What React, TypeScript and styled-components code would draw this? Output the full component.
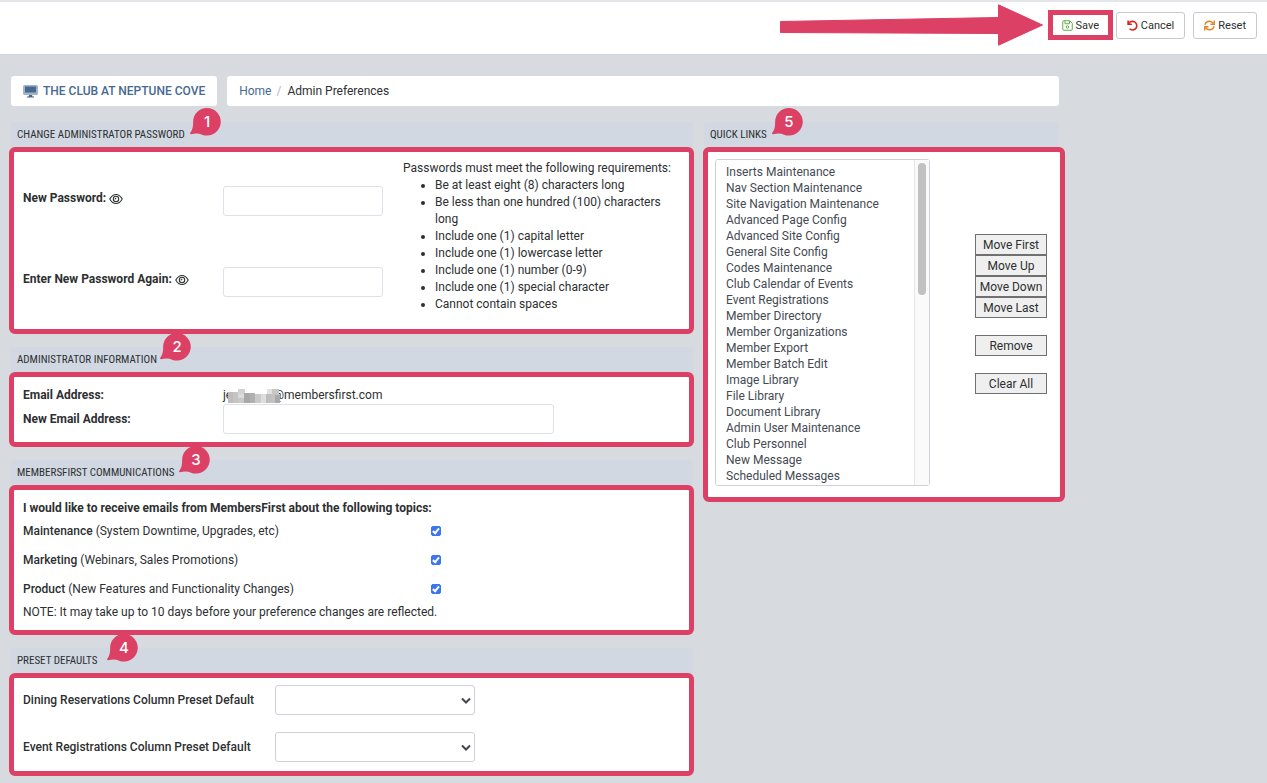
import React from "react";
import styled, { createGlobalStyle } from "styled-components";

const pink = "#dc4064";
const link = "#456990";
const ink = "#2d2f31";
const sans = `Roboto, "Liberation Sans", sans-serif`;

const GlobalStyle = createGlobalStyle`
  *, *::before, *::after { box-sizing: border-box; }
  body {
    margin: 0;
    background: #d7dade;
    color: ${ink};
    font-family: ${sans};
    font-size: 12px;
    line-height: 17px;
  }
  button, input, select { font-family: inherit; font-size: inherit; color: inherit; }
  svg { flex: none; }
`;

const Toolbar = styled.header`
  display: flex;
  justify-content: flex-end;
  align-items: center;
  height: 55px;
  padding: 0 10px 6px 0;
  background: #fff;
  border-top: 2px solid #e4e6e9;
  border-bottom: 1px solid #d1d4d9;
`;

const Arrow = styled.svg`
  width: 263px;
  height: 42px;
  margin-right: 5px;
`;

const SaveFrame = styled.div`
  border: 5px solid ${pink};
  margin-right: 3px;
`;

const ToolButton = styled.button<{ $plain?: boolean }>`
  display: flex;
  align-items: center;
  justify-content: center;
  gap: 3px;
  width: ${(p) => (p.$plain ? "55px" : "auto")};
  height: ${(p) => (p.$plain ? "20px" : "27px")};
  padding: ${(p) => (p.$plain ? "0" : "0 10px")};
  border: ${(p) => (p.$plain ? "0" : "1px solid #c8cacd")};
  border-radius: 3px;
  background: #fff;
  font-size: 11px;
  & + & { margin-left: 8px; }
`;

const Page = styled.main`
  max-width: 1070px;
  padding: 21px 11px 7px;
`;

const CrumbRow = styled.div`
  display: flex;
  gap: 10px;
  margin-bottom: 16px;
`;

const Club = styled.a`
  display: flex;
  align-items: center;
  gap: 5px;
  height: 30px;
  padding: 0 12px;
  background: #fff;
  border-radius: 3px;
  color: ${link};
  font-weight: 500;
  text-decoration: none;
`;

const Crumbs = styled.nav`
  display: flex;
  align-items: center;
  flex: 1;
  height: 30px;
  padding: 0 12px;
  background: #fff;
  border-radius: 3px;
`;

const CrumbLink = styled.a`
  color: ${link};
  text-decoration: none;
`;

const Slash = styled.span`
  padding: 0 6px 0 5px;
  color: #b4b8bd;
`;

const Columns = styled.div`
  display: grid;
  grid-template-columns: minmax(0, 682fr) minmax(0, 355fr);
  gap: 11px;
  align-items: start;
`;

const Stack = styled.div`
  display: grid;
  gap: 13px;
`;

const PanelHead = styled.div`
  position: relative;
  height: 25px;
  padding: 0 6px;
  background: #d1d8e2;
  border-radius: 4px 4px 0 0;
`;

const PanelTitle = styled.h2`
  margin: 0;
  font-family: "Roboto Condensed", Roboto, sans-serif;
  font-size: 11px;
  font-weight: 400;
  line-height: 26px;
  text-transform: uppercase;
`;

const Badge = styled.span<{ $at: number }>`
  position: absolute;
  top: -14px;
  left: ${(p) => p.$at}px;
  width: 31px;
  height: 28px;
  padding-left: 3px;
  color: #fff;
  font: 500 15px/28px Inter, Roboto, sans-serif;
  text-align: center;
  z-index: 1;
  svg { position: absolute; inset: 0; z-index: -1; }
`;

const Body = styled.div<{ $right?: boolean }>`
  margin: ${(p) => (p.$right ? "0 -6px 0 -1px" : "0 -1px 0 -2px")};
  border: 5px solid ${pink};
  border-radius: 6px;
  background: #fff;
`;

const Panel = ({ title, badge, at, right, children }: {
  title: string; badge: number; at: number; right?: boolean; children: React.ReactNode;
}) => (
  <section>
    <PanelHead>
      <PanelTitle>{title}</PanelTitle>
      <Badge $at={at}>
        <svg width="31" height="28" viewBox="0 0 32 29" aria-hidden="true">
          <path fill={pink} d="M17.5 0A14.3 14.3 0 1 1 12.5 27.7C9 26 5 26.2 1.2 27.2Q-.6 27 .4 25.5C2.800 22 3.200 19 3.200 14.500A14.300 14.300 0 0 1 17.500 0Z" />
        </svg>
        {badge}
      </Badge>
    </PanelHead>
    <Body $right={right}>{children}</Body>
  </section>
);

const PasswordLayout = styled.div`
  display: grid;
  grid-template-columns: 380px minmax(0, 1fr);
  padding: 8px 8px 7px 9px;
`;

const PasswordFields = styled.div`
  display: grid;
  grid-auto-rows: 81px;
  align-items: center;
  label { padding-bottom: 4px; }
`;

const Field = styled.div`
  display: grid;
  grid-template-columns: 200px minmax(0, 1fr);
  align-items: center;
`;

const Label = styled.label<{ $weight?: number }>`
  display: flex;
  align-items: center;
  gap: 3px;
  font-weight: ${(p) => p.$weight ?? 700};
`;

const TextBox = styled.input<{ $wide?: boolean }>`
  width: ${(p) => (p.$wide ? "331px" : "160px")};
  max-width: 100%;
  height: 30px;
  padding: 0 10px;
  border: 1px solid #dee1e7;
  border-radius: 3px;
  background: #fff;
`;

const Rules = styled.ul`
  margin: 0;
  padding-left: 32px;
`;

const EmailLayout = styled.div`
  display: grid;
  padding: 10px 9px 8px;
`;

const EmailValue = styled.span`
  display: flex;
  align-items: center;
`;

const Mosaic = styled.svg`
  width: 55px;
  height: 14px;
  margin: 0 -8px 0 -6px;
  position: relative;
`;

const Topics = styled.div`
  padding: 10px 9px 9px;
`;

const Strong = styled.strong<{ $medium?: boolean }>`
  font-weight: ${(p) => (p.$medium ? 500 : 700)};
`;

const Topic = styled.div`
  display: grid;
  grid-template-columns: 408px auto;
  justify-content: start;
  align-items: center;
  height: 29px;
`;

const Tick = styled.input`
  appearance: none;
  display: grid;
  width: 10px;
  height: 10px;
  margin: 0 0 2px;
  border-radius: 2px;
  border: 1px solid #767676;
  &:checked { background: #3b75f0; border-color: #3b75f0; }
  &:checked::after {
    content: "";
    width: 4px;
    height: 7px;
    margin: 0 2px;
    border: solid #fff;
    border-width: 0 2px 2px 0;
    transform: rotate(40deg);
  }
`;

const Presets = styled.div`
  display: grid;
  gap: 17px;
  padding: 7px 9px 9px;
`;

const PresetRow = styled.div`
  display: grid;
  grid-template-columns: 252px minmax(0, 200px);
  align-items: center;
`;

const Drop = styled.div`
  position: relative;
  svg { position: absolute; right: 4px; top: 12px; pointer-events: none; }
`;

const DropSelect = styled.select`
  appearance: none;
  display: block;
  width: 100%;
  height: 30px;
  padding: 0 20px 0 10px;
  border: 1px solid #ced1d8;
  border-radius: 3px;
  background: #fff;
`;

const QuickLayout = styled.div`
  display: flex;
  align-items: flex-start;
  justify-content: space-between;
  padding: 7px 13px 11px 7px;
`;

const ListWrap = styled.div`
  position: relative;
  width: 215px;
`;

const List = styled.select`
  display: block;
  width: 100%;
  height: 327px;
  padding: 5px 0 0 8px;
  border: 1px solid #ced1d8;
  border-radius: 3px;
  background: #fff;
  color: #444a52;
  overflow-y: scroll;
  scrollbar-width: none;
  option { min-height: 0; height: 16px; padding: 0 2px; line-height: 16px; }
`;

const Track = styled.div`
  position: absolute;
  top: 1px;
  right: 1px;
  bottom: 1px;
  width: 15px;
  padding: 3px;
  border-left: 1px solid #e6e6e6;
  background: #fafafa;
  pointer-events: none;
  &::before {
    content: "";
    display: block;
    width: 8px;
    height: 132px;
    border-radius: 4px;
    background: #c1c1c1;
  }
`;

const Actions = styled.div`
  display: grid;
  gap: 17px;
  width: 72px;
  padding-top: 75px;
`;

const ActionGroup = styled.div`
  display: grid;
`;

const Action = styled.button`
  height: 21px;
  padding: 0;
  border: 1px solid #707070;
  border-radius: 0;
  background: #efefef;
  white-space: nowrap;
`;

const SaveIcon = () => (
  <svg width="11" height="11" viewBox="0 0 22 22" fill="none" stroke="#5fae4b" strokeWidth="2" aria-hidden="true">
    <path d="M3.500 1.500h12l5 5v12a2 2 0 0 1-2 2h-15a2 2 0 0 1-2-2v-15a2 2 0 0 1 2-2Z" />
    <path d="M6 2v5.500h9V2" />
    <circle cx="11" cy="14" r="2.500" />
  </svg>
);

const UndoIcon = () => (
  <svg width="11" height="11" viewBox="0 0 22 22" fill="none" stroke="#e0201b" strokeWidth="3.200" aria-hidden="true">
    <path d="M2.200 1v7.500h7.500" />
    <path d="M3 8A8.600 8.600 0 1 1 5 17.500" />
  </svg>
);

const ResetIcon = () => (
  <svg width="11" height="11" viewBox="0 0 22 22" fill="none" stroke="#e08326" strokeWidth="2.800" aria-hidden="true">
    <path d="M2 9.500C3 5 6.500 2.400 11 2.400c3.500 0 6 1.600 8 4.600" />
    <path d="M20 12.500c-1 4.500-4.500 7.100-9 7.100-3.500 0-6-1.600-8-4.600" />
    <path d="M20.500 1v7.500H13" />
    <path d="M1.500 21v-7.500H9" />
  </svg>
);

const MonitorIcon = () => (
  <svg width="15" height="13" viewBox="0 0 15 13" aria-hidden="true">
    <path fill="#a3b4c8" d="M1.500 0h12A1.500 1.500 0 0 1 15 1.500v7a1.500 1.500 0 0 1-1.500 1.500h-12A1.500 1.500 0 0 1 0 8.500v-7A1.500 1.500 0 0 1 1.500 0Z" />
    <path fill={link} d="M2 1.500h11v6H2zM6 10h3l.5 1.500H11v1H4v-1h1.500z" />
  </svg>
);

const EyeIcon = () => (
  <svg width="14" height="12" viewBox="0 0 26 22" fill="none" stroke={ink} strokeWidth="2" aria-hidden="true">
    <path d="M1.500 11C4.500 5.500 8.500 2.500 13 2.500S21.500 5.500 24.500 11C21.500 16.500 17.500 19.500 13 19.500S4.500 16.500 1.500 11Z" />
    <circle cx="13" cy="11" r="5" />
    <path d="M13 8.500a2.500 2.500 0 0 1-2.500 2.500" />
  </svg>
);

const Chevron = () => (
  <svg width="10" height="8" viewBox="0 0 10 8" fill="none" stroke="#43474d" strokeWidth="2" aria-hidden="true">
    <path d="M1 1.500 5 5.500 9 1.500" />
  </svg>
);

const mosaic: [number, number, number, number, string][] = [
  [2, 3, 5, 11, "#bdbdbd"], [7, 3, 5, 11, "#c4c4c4"], [12, 3, 6, 6, "#dcdcdc"], [12, 9, 6, 5, "#c8c8c8"],
  [12, 0, 7, 5, "#d2d2d2"], [18, 4, 6, 10, "#a8a8a8"], [24, 4, 5, 10, "#b0b0b0"], [29, 5, 6, 9, "#cacaca"],
  [35, 5, 5, 9, "#dddddd"], [40, 5, 5, 9, "#bdbdbd"], [45, 5, 4, 9, "#c2c2c2"], [41, 0, 5, 5, "#e0e0e0"],
  [46, 0, 7, 6, "#c6c6c6"], [49, 6, 5, 8, "#a9a9a9"],
];

const rules = [
  "Be at least eight (8) characters long",
  "Be less than one hundred (100) characters long",
  "Include one (1) capital letter",
  "Include one (1) lowercase letter",
  "Include one (1) number (0-9)",
  "Include one (1) special character",
  "Cannot contain spaces",
];

const topics = [
  ["maintenance", "Maintenance", "(System Downtime, Upgrades, etc)"],
  ["marketing", "Marketing", "(Webinars, Sales Promotions)"],
  ["product", "Product", "(New Features and Functionality Changes)"],
];

const presets = [
  ["dining", "Dining Reservations Column Preset Default"],
  ["events", "Event Registrations Column Preset Default"],
];

const quickLinks = [
  "Inserts Maintenance", "Nav Section Maintenance", "Site Navigation Maintenance", "Advanced Page Config",
  "Advanced Site Config", "General Site Config", "Codes Maintenance", "Club Calendar of Events",
  "Event Registrations", "Member Directory", "Member Organizations", "Member Export", "Member Batch Edit",
  "Image Library", "File Library", "Document Library", "Admin User Maintenance", "Club Personnel",
  "New Message", "Scheduled Messages", "Template Maintenance",
];

const actionGroups = [["Move First", "Move Up", "Move Down", "Move Last"], ["Remove"], ["Clear All"]];

export default function App() {
  return (
    <>
      <GlobalStyle />
      <Toolbar>
        <Arrow viewBox="0 0 263 42" aria-hidden="true">
          <path fill={pink} stroke={pink} strokeWidth="1" strokeLinejoin="round" d="M.5 17.500 218.500 13.500V.8L262.500 21 218.500 41.200V29.500L.5 28.500Z" />
        </Arrow>
        <SaveFrame>
          <ToolButton type="button" $plain><SaveIcon />Save</ToolButton>
        </SaveFrame>
        <ToolButton type="button"><UndoIcon />Cancel</ToolButton>
        <ToolButton type="button"><ResetIcon />Reset</ToolButton>
      </Toolbar>
      <Page>
        <CrumbRow>
          <Club href="#club"><MonitorIcon />THE CLUB AT NEPTUNE COVE</Club>
          <Crumbs aria-label="Breadcrumb">
            <CrumbLink href="#home">Home</CrumbLink>
            <Slash>/</Slash>
            <span>Admin Preferences</span>
          </Crumbs>
        </CrumbRow>
        <Columns>
          <Stack>
            <Panel title="Change Administrator Password" badge={1} at={179}>
              <PasswordLayout>
                <PasswordFields>
                  <Field>
                    <Label htmlFor="pw">New Password: <EyeIcon /></Label>
                    <TextBox id="pw" type="password" />
                  </Field>
                  <Field>
                    <Label htmlFor="pw2">Enter New Password Again: <EyeIcon /></Label>
                    <TextBox id="pw2" type="password" />
                  </Field>
                </PasswordFields>
                <div>
                  Passwords must meet the following requirements:
                  <Rules>{rules.map((r) => <li key={r}>{r}</li>)}</Rules>
                </div>
              </PasswordLayout>
            </Panel>
            <Panel title="Administrator Information" badge={2} at={149}>
              <EmailLayout>
                <Field>
                  <Strong>Email Address:</Strong>
                  <EmailValue>
                    je
                    <Mosaic viewBox="0 0 55 14" aria-hidden="true">
                      {mosaic.map(([x, y, w, h, c], i) => <rect key={i} x={x} y={y} width={w} height={h} fill={c} />)}
                    </Mosaic>
                    @membersfirst.com
                  </EmailValue>
                </Field>
                <Field>
                  <Label htmlFor="email">New Email Address:</Label>
                  <TextBox id="email" type="email" $wide />
                </Field>
              </EmailLayout>
            </Panel>
            <Panel title="MembersFirst Communications" badge={3} at={168}>
              <Topics>
                <Strong>I would like to receive emails from MembersFirst about the following topics:</Strong>
                {topics.map(([id, name, note]) => (
                  <Topic key={id}>
                    <label htmlFor={id}><Strong $medium>{name}</Strong> {note}</label>
                    <Tick id={id} type="checkbox" defaultChecked />
                  </Topic>
                ))}
                <div>NOTE: It may take up to 10 days before your preference changes are reflected.</div>
              </Topics>
            </Panel>
            <Panel title="Preset Defaults" badge={4} at={96}>
              <Presets>
                {presets.map(([id, name]) => (
                  <PresetRow key={id}>
                    <Label htmlFor={id} $weight={500}>{name}</Label>
                    <Drop>
                      <DropSelect id={id}><option /></DropSelect>
                      <Chevron />
                    </Drop>
                  </PresetRow>
                ))}
              </Presets>
            </Panel>
          </Stack>
          <Panel title="Quick Links" badge={5} at={68} right>
            <QuickLayout>
              <ListWrap>
                <List multiple aria-label="Quick links">
                  {quickLinks.map((q) => <option key={q}>{q}</option>)}
                </List>
                <Track />
              </ListWrap>
              <Actions>
                {actionGroups.map((group) => (
                  <ActionGroup key={group[0]}>
                    {group.map((name) => <Action key={name} type="button">{name}</Action>)}
                  </ActionGroup>
                ))}
              </Actions>
            </QuickLayout>
          </Panel>
        </Columns>
      </Page>
    </>
  );
}
